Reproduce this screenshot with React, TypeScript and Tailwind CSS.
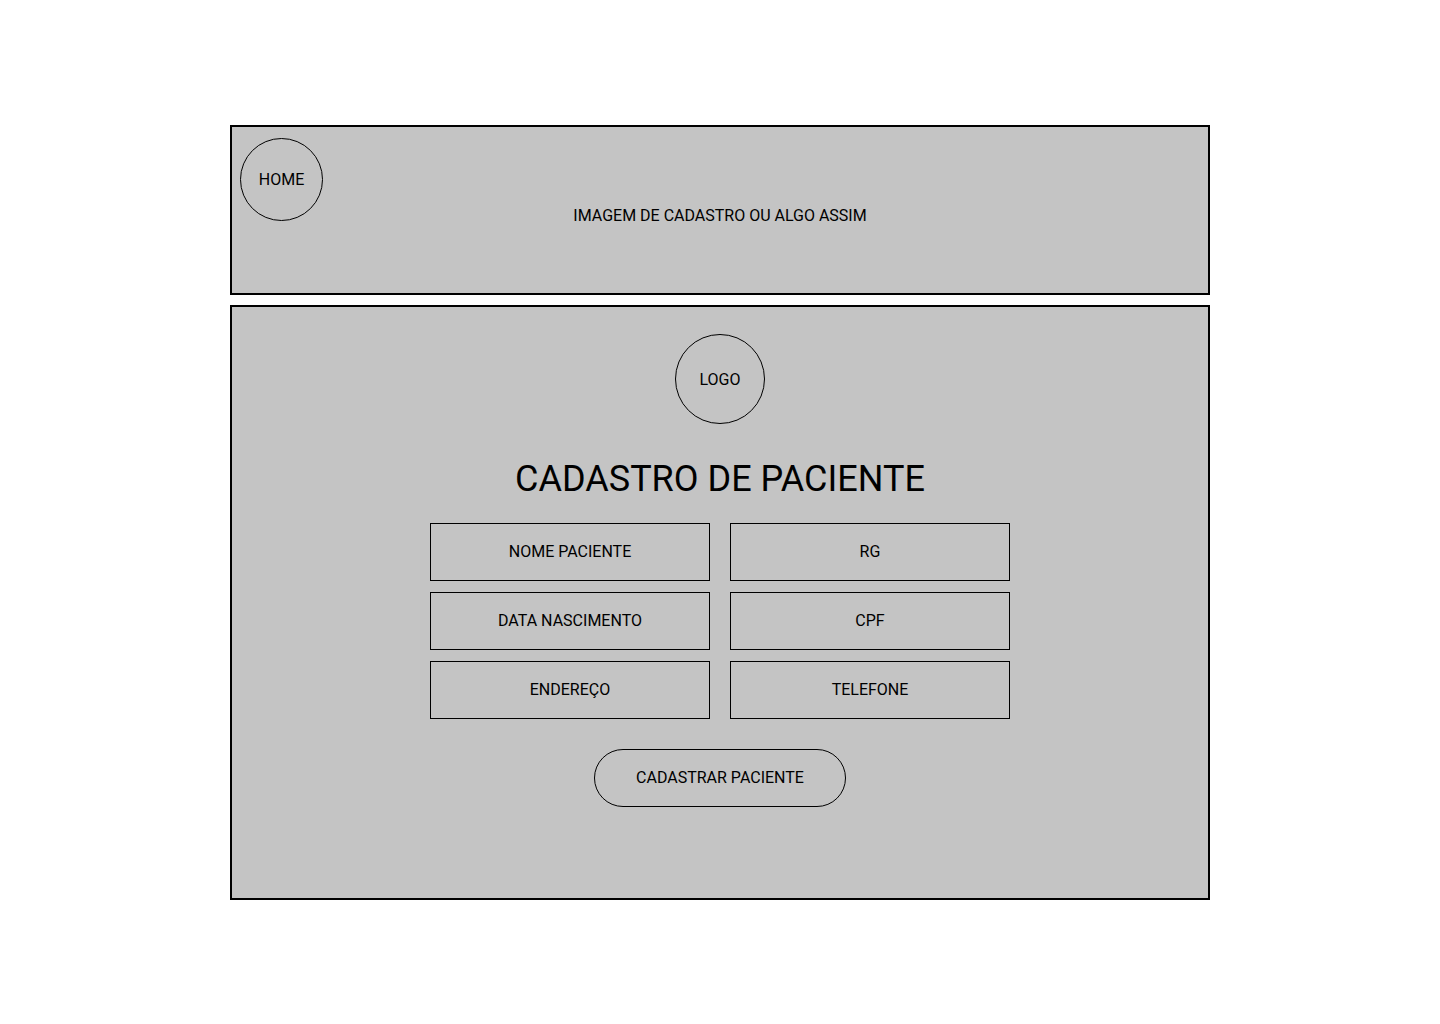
const fields = [
  { id: "nome", label: "NOME PACIENTE", type: "text" },
  { id: "rg", label: "RG", type: "text" },
  { id: "nascimento", label: "DATA NASCIMENTO", type: "text" },
  { id: "cpf", label: "CPF", type: "text" },
  { id: "endereco", label: "ENDEREÇO", type: "text" },
  { id: "telefone", label: "TELEFONE", type: "tel" },
];

export default function App() {
  return (
    <div className="flex min-h-screen flex-col justify-center bg-white px-5 font-['Roboto',sans-serif] text-base text-black">
      <div className="mx-auto flex w-full max-w-[980px] flex-col gap-2.5">
        <header className="grid min-h-[170px] grid-cols-[1fr_auto_1fr] border-2 border-black bg-[#c4c4c4] px-2 py-[11px]">
          <a
            href="#home"
            className="flex size-[83px] items-center justify-center rounded-full border border-black pt-0.5"
          >
            HOME
          </a>
          <p className="self-center pt-3">IMAGEM DE CADASTRO OU ALGO ASSIM</p>
        </header>

        <main className="flex flex-col items-center border-2 border-black bg-[#c4c4c4] px-5 pt-[27px] pb-[91px]">
          <div className="flex size-[90px] items-center justify-center rounded-full border border-black pt-0.5">
            LOGO
          </div>
          <h1 className="mt-[33px] text-4xl leading-[44px]">CADASTRO DE PACIENTE</h1>

          <form
            className="mt-[22px] flex w-full max-w-[580px] flex-col items-center gap-[30px]"
            onSubmit={(event) => event.preventDefault()}
          >
            <div className="grid w-full grid-cols-2 gap-x-5 gap-y-[11px]">
              {fields.map((field) => (
                <input
                  key={field.id}
                  id={field.id}
                  name={field.id}
                  type={field.type}
                  aria-label={field.label}
                  placeholder={field.label}
                  className="h-[58px] w-full min-w-0 border border-black bg-transparent px-4 text-center placeholder:text-black placeholder:opacity-100"
                />
              ))}
            </div>
            <button
              type="submit"
              className="h-[58px] rounded-full border border-black px-[41px]"
            >
              CADASTRAR PACIENTE
            </button>
          </form>
        </main>
      </div>
    </div>
  );
}
